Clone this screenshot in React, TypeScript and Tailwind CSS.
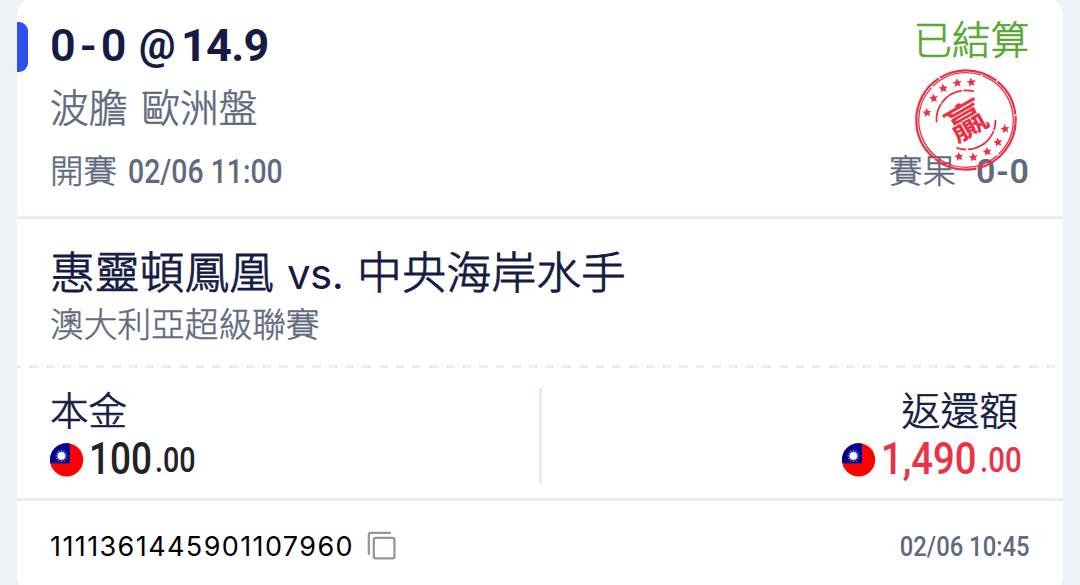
import type { ReactNode } from "react";
import clsx from "clsx";

const STARS = [
  [13, 44.7], [19.7, 30.3], [29.3, 20.3], [43.3, 15], [57.3, 14.3],
  [91, 61], [84, 74.3], [73.3, 83.7], [59.3, 89.3], [45, 88.7],
];

const STAR_PATH =
  "M0 -4.8 1.4 -1.6 4.6 -1.5 2.1 .7 2.8 3.9 0 2.1 -2.8 3.9 -2.1 .7 -4.6 -1.5 -1.4 -1.6Z";

const Num = ({ className, children }: { className: string; children: ReactNode }) => (
  <span className={clsx("inline-block font-['Roboto',sans-serif] leading-none whitespace-pre", className)}>
    {children}
  </span>
);

const Flag = () => (
  <svg viewBox="0 0 34 34" className="mt-px h-[34px] w-[34px] shrink-0">
    <clipPath id="flag">
      <circle cx="16.6" cy="16.8" r="16.6" />
    </clipPath>
    <g clipPath="url(#flag)">
      <rect width="34" height="34" fill="#fe0000" />
      <rect width="20" height="20.3" fill="#000095" />
    </g>
    {Array.from({ length: 12 }, (_, i) => (
      <path key={i} d="M10.1 12.9 11.4 6.2 12.7 12.9Z" fill="#fff" transform={`rotate(${i * 30} 11.4 12.9)`} />
    ))}
    <circle cx="11.4" cy="12.9" r="4.1" fill="#fff" stroke="#000095" strokeWidth="0.5" />
  </svg>
);

const CopyIcon = () => (
  <svg viewBox="0 0 29 29" className="-mt-px h-[29px] w-[29px]" fill="none" stroke="#9297a1" strokeWidth="2.3">
    <path d="M1.9 23V3.4Q1.9 1.9 3.4 1.9H23" strokeLinecap="round" />
    <rect x="6.8" y="6.9" width="20.6" height="20.5" rx="1.6" />
  </svg>
);

const WinStamp = () => (
  <svg viewBox="0 0 104 104" className="absolute top-[72px] right-[45.5px] h-[104px] w-[104px]">
    <g fill="none" stroke="#ee2f43">
      <circle cx="52" cy="52" r="49.7" strokeWidth="2.2" strokeDasharray="66 1.5 44 1.5 92 1.5 60 1.5 38 1.5" />
      <circle cx="52" cy="52" r="47.3" strokeWidth="1.3" strokeDasharray="38 2 63 1 80 2 52 1.5 58 2" />
      <path d="M22.6 54.3A29.5 29.5 0 0 1 27 36M27.3 35.5A29.5 29.5 0 0 1 47.8 22.6M49.5 22.5A29.5 29.5 0 0 1 60 23.4" strokeWidth="1.8" />
      <path d="M81.5 52A29.5 29.5 0 0 1 80 62M79.7 63A29.5 29.5 0 0 1 54 81.4M52 81.5A29.5 29.5 0 0 1 42.5 79.8" strokeWidth="1.8" />
    </g>
    {STARS.map(([x, y]) => (
      <path key={x} d={STAR_PATH} fill="#ee2f43" transform={`translate(${x} ${y}) rotate(-8)`} />
    ))}
    <text
      x="52"
      y="67"
      textAnchor="middle"
      transform="rotate(-30 52 52)"
      className="fill-[#ee2f43] font-['Noto_Sans_CJK_TC',sans-serif] text-[39px] font-bold"
    >
      贏
    </text>
  </svg>
);

const App = () => {
  return (
    <div className="h-[585px] overflow-hidden bg-[#edf2f6] px-[17px] font-['Inter','Noto_Sans_CJK_TC',sans-serif] leading-none">
      <div className="relative -mt-1 h-[600px] rounded-[20px] bg-white pt-1 text-[#151b44]">
        <div className="h-[218.5px] border-b-[3px] border-[#e9ecf5] pt-[22px]">
          <div className="flex h-[50px] items-start">
            <div className="h-[50px] w-[11px] rounded-r-[9px] bg-[#2b50ed]" />
            <div className="ml-[22px] flex h-[46px] items-center">
              <Num className="w-[89px] text-[45px] font-semibold tracking-[4.3px]">0-0</Num>
              <Num className="w-[42px] origin-left scale-x-[0.97] text-[42px] font-bold">@</Num>
              <Num className="text-[45px] font-bold tracking-[-0.7px]">14.9</Num>
            </div>
            <div className="mt-[-5px] mr-[34px] ml-auto flex h-[46px] items-center text-[38.5px] font-light text-[#57a733] [-webkit-text-stroke:0.7px]">
              已結算
            </div>
          </div>
          <div className="mt-[11px] flex h-[50px] items-center pl-[33px] text-[38.7px] font-light text-[#5f6a80] [word-spacing:3px] [-webkit-text-stroke:0.6px]">
            波膽 歐洲盤
          </div>
          <div className="mt-[18px] flex h-[40px] items-center justify-between pr-[33px] pl-[33px] text-[33.5px] font-light text-[#5f6a80]">
            <div className="flex items-center">
              <span className="mt-[2px] [-webkit-text-stroke:0.5px]">開賽</span>
              <Num className="ml-[11px] origin-left scale-x-[0.86] text-[33px] font-medium">02/06 11:00</Num>
            </div>
            <div className="flex items-center">
              <span className="mt-[2px] [-webkit-text-stroke:0.5px]">賽果</span>
              <Num className="ml-[20px] w-[54px] text-[34px] font-semibold tracking-[0.8px]">0-0</Num>
            </div>
          </div>
        </div>

        <WinStamp />

        <div className="h-[146.5px] pt-[30px] pl-[33px]">
          <div className="flex h-[50px] items-center text-[44.8px] font-light whitespace-pre [-webkit-text-stroke:0.9px]">
            <span>惠靈頓鳳凰</span>
            <span className="ml-[13px] w-[70px] text-[42px] font-normal tracking-[-0.5px] [-webkit-text-stroke:0px]">vs.</span>
            <span>中央海岸水手</span>
          </div>
          <div className="mt-[6px] flex h-[40px] items-center text-[33.7px] font-light text-[#5f6a80] [-webkit-text-stroke:0.5px]">
            澳大利亞超級聯賽
          </div>
        </div>
        <div className="h-[3px] bg-[repeating-linear-gradient(90deg,#e9ebf6_0px_4px,transparent_4px_12px,#e9ebf6_12px_16.67px)]" />

        <div className="flex h-[132.5px] border-b-[3px] border-[#e9ecf5] pt-[20px]">
          <div className="w-[522px] pl-[33px]">
            <div className="flex h-[46px] items-center text-[38.5px] font-light [-webkit-text-stroke:0.7px]">本金</div>
            <div className="flex h-[50px] items-center text-[#222]">
              <Flag />
              <Num className="ml-[5px] w-[66px] origin-left scale-x-[0.84] text-[44px] font-medium">100</Num>
              <Num className="mt-[3px] origin-left scale-x-[0.82] text-[35px] font-medium">.00</Num>
            </div>
          </div>
          <div className="h-[96px] w-[3px] bg-[#e9ecf5]" />
          <div className="flex flex-1 flex-col items-end">
            <div className="mr-[45px] flex h-[46px] items-center text-[38.8px] font-light [-webkit-text-stroke:0.7px]">
              返還額
            </div>
            <div className="mr-[42px] flex h-[50px] items-center text-[#ea3346]">
              <Flag />
              <Num className="ml-[5px] w-[99px] origin-left scale-x-[0.87] text-[44px] font-medium">1,490</Num>
              <Num className="mt-[3px] w-[41px] origin-left scale-x-[0.84] text-[35px] font-medium">.00</Num>
            </div>
          </div>
        </div>

        <div className="flex h-[90px] items-center justify-between pr-[34px] pl-[33px]">
          <div className="flex items-center text-[27px] text-black">
            <span className="mt-px tracking-[1.4px]">1111361445901107960</span>
            <span className="ml-[13px]">
              <CopyIcon />
            </span>
          </div>
          <Num className="mt-[2px] w-[152px] origin-right scale-x-[0.85] text-[28px] font-medium text-[#5f6a80]">02/06 10:45</Num>
        </div>
      </div>
    </div>
  );
};

export default App;
